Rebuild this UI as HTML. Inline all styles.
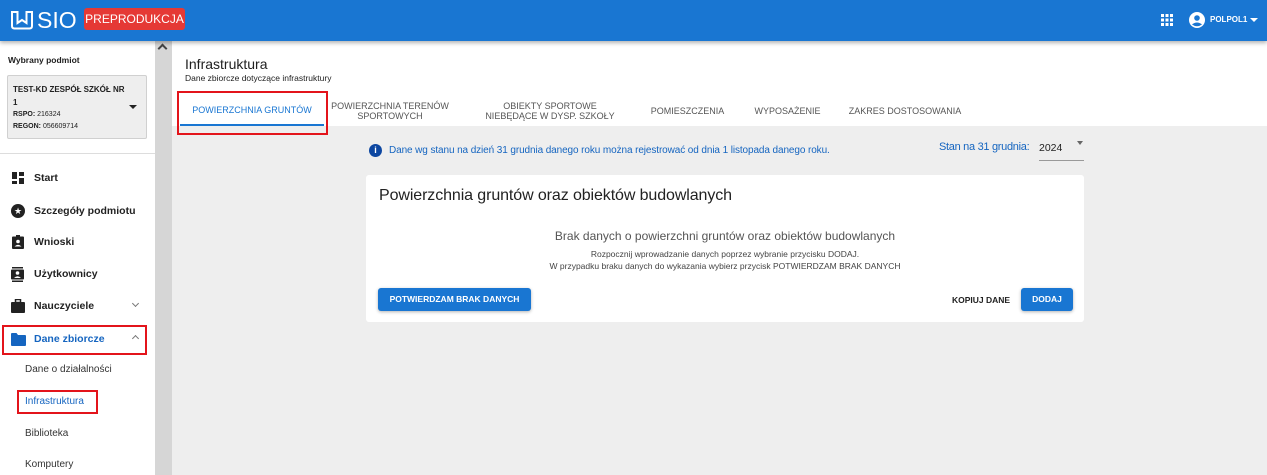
<!DOCTYPE html>
<html><head><meta charset="utf-8"><style>
*{box-sizing:border-box;margin:0;padding:0}
body{width:1267px;height:475px;overflow:hidden;font-family:"Liberation Sans",sans-serif;background:#eeeeee;position:relative;color:#212121}
.a{position:absolute;white-space:nowrap}
.hdr{left:0;top:0;width:1267px;height:41px;background:#1976d2;box-shadow:0 2px 4px rgba(0,0,0,.3);z-index:3}
.side{left:0;top:41px;width:155px;height:434px;background:#fff}
.sb{left:155px;top:41px;width:17px;height:434px;background:#d6d6d6}
.top{left:172px;top:41px;width:1095px;height:85px;background:#fff}
.tab{font-size:9px;color:#555;text-align:center;line-height:10px;white-space:normal}
.nav{left:11px;font-size:10.5px;font-weight:bold;color:#222}
.sub{left:25px;font-size:10px;color:#333}
.red{border:2.5px solid #e3141b}
</style></head><body>
<div class="a hdr">
  <svg class="a" style="left:10px;top:10px" width="24" height="20" viewBox="0 0 24 20"><path d="M2 2 L2 16 Q2 18.5 4.5 18.5 L19.5 18.5 Q22 18.5 22 16 L22 2 L16.5 2 L16.5 13 L12 10 L7.5 13 L7.5 2 Z" fill="none" stroke="#fff" stroke-width="2"/></svg>
  <div class="a" style="left:37px;top:7px;font-size:23px;color:#fff;letter-spacing:0px">SIO</div>
  <div class="a" style="left:84px;top:8px;width:101px;height:22px;background:#e53935;border-radius:3px;color:#fff;font-size:12px;line-height:22px;text-align:center">PREPRODUKCJA</div>
  <svg class="a" style="left:1161px;top:14px" width="12" height="12" viewBox="0 0 12 12" fill="#fff"><rect x="0" y="0" width="3" height="3"/><rect x="4.5" y="0" width="3" height="3"/><rect x="9" y="0" width="3" height="3"/><rect x="0" y="4.5" width="3" height="3"/><rect x="4.5" y="4.5" width="3" height="3"/><rect x="9" y="4.5" width="3" height="3"/><rect x="0" y="9" width="3" height="3"/><rect x="4.5" y="9" width="3" height="3"/><rect x="9" y="9" width="3" height="3"/></svg>
  <svg class="a" style="left:1189px;top:12px" width="16" height="16" viewBox="0 0 16 16"><circle cx="8" cy="8" r="8" fill="#fff"/><circle cx="8" cy="6" r="2.8" fill="#1976d2"/><path d="M3 12.5 Q8 8.5 13 12.5 Q8 16 3 12.5Z" fill="#1976d2"/></svg>
  <div class="a" style="left:1210px;top:15px;font-size:8px;color:#fff;font-weight:bold">POLPOL1</div>
  <div class="a" style="left:1250px;top:18px;border:4px solid transparent;border-top:4px solid #fff"></div>
</div>
<div class="a side">
  <div class="a" style="left:8px;top:14px;font-size:8.5px;font-weight:bold">Wybrany podmiot</div>
  <div class="a" style="left:7px;top:34px;width:140px;height:64px;background:#eeeeee;border:1px solid #d0d0d0;border-radius:2px"></div>
  <div class="a" style="left:13px;top:42px;font-size:8px;font-weight:bold;line-height:13px">TEST-KD ZESPÓŁ SZKÓŁ NR<br>1</div>
  <div class="a" style="left:13px;top:70px;font-size:7px"><b>RSPO:</b> 216324</div>
  <div class="a" style="left:13px;top:82px;font-size:7px"><b>REGON:</b> 056609714</div>
  <div class="a" style="left:129px;top:64px;border:4px solid transparent;border-top:4px solid #222"></div>
  <div class="a" style="left:0;top:112px;width:155px;height:1px;background:#ddd"></div>
</div>
<div class="a sb"><div class="a" style="left:4px;top:4px;width:7px;height:7px;border-left:2px solid #444;border-top:2px solid #444;transform:rotate(45deg)"></div></div>
<!-- nav -->
<div class="a" style="left:12px;top:172px;width:12px;height:12px;background:linear-gradient(#222,#222) 0 0/5px 7px no-repeat,linear-gradient(#222,#222) 7px 0/5px 4px no-repeat,linear-gradient(#222,#222) 0 9px/5px 3px no-repeat,linear-gradient(#222,#222) 7px 6px/5px 6px no-repeat"></div>
<div class="a nav" style="left:34px;top:172px">Start</div>
<div class="a" style="left:11px;top:204px;width:14px;height:14px;border-radius:50%;background:#222;color:#fff;font-size:9px;text-align:center;line-height:14px">★</div>
<div class="a nav" style="left:34px;top:205px">Szczegóły podmiotu</div>
<svg class="a" style="left:12px;top:235px" width="12" height="14" viewBox="0 0 12 14"><rect x="0" y="1.5" width="12" height="12.5" rx="1" fill="#222"/><rect x="4" y="0" width="4" height="3" fill="#222"/><circle cx="6" cy="6.5" r="1.8" fill="#fff"/><path d="M2.5 11.5 Q6 8 9.5 11.5Z" fill="#fff"/></svg>
<div class="a nav" style="left:34px;top:236px">Wnioski</div>
<svg class="a" style="left:11px;top:267px" width="13" height="15" viewBox="0 0 13 15"><rect x="1" y="0" width="11" height="1.5" fill="#222"/><rect x="0" y="2.5" width="13" height="10" rx="1" fill="#222"/><rect x="1" y="13.5" width="11" height="1.5" fill="#222"/><circle cx="6.5" cy="6" r="1.8" fill="#fff"/><path d="M3 11 Q6.5 7.5 10 11Z" fill="#fff"/></svg>
<div class="a nav" style="left:34px;top:268px">Użytkownicy</div>
<svg class="a" style="left:11px;top:299px" width="14" height="14" viewBox="0 0 14 14"><rect x="4.5" y="0.5" width="5" height="3" fill="none" stroke="#222" stroke-width="1.5"/><rect x="0" y="3" width="14" height="11" rx="1" fill="#222"/></svg>
<div class="a nav" style="left:34px;top:300px">Nauczyciele</div>
<div class="a" style="left:133px;top:301px;width:5px;height:5px;border-right:1.5px solid #777;border-bottom:1.5px solid #777;transform:rotate(45deg)"></div>
<div class="a red" style="left:2px;top:325px;width:145px;height:30px"></div>
<svg class="a" style="left:11px;top:333px" width="15" height="13" viewBox="0 0 15 13"><path d="M0 1 Q0 0 1 0 L5.5 0 L7 2 L14 2 Q15 2 15 3 L15 12 Q15 13 14 13 L1 13 Q0 13 0 12Z" fill="#1565c0"/></svg>
<div class="a nav" style="left:34px;top:333px;color:#1565c0">Dane zbiorcze</div>
<div class="a" style="left:133px;top:336px;width:5px;height:5px;border-left:1.5px solid #777;border-top:1.5px solid #777;transform:rotate(45deg)"></div>
<div class="a sub" style="top:364px">Dane o działalności</div>
<div class="a red" style="left:17px;top:390px;width:81px;height:24px"></div>
<div class="a sub" style="top:396px;color:#1565c0">Infrastruktura</div>
<div class="a sub" style="top:428px">Biblioteka</div>
<div class="a sub" style="top:459px">Komputery</div>
<!-- top -->
<div class="a top"></div>
<div class="a" style="left:185px;top:56px;font-size:14px">Infrastruktura</div>
<div class="a" style="left:185px;top:73px;font-size:8.5px">Dane zbiorcze dotyczące infrastruktury</div>
<div class="a red" style="left:177px;top:91px;width:151px;height:44px"></div>
<div class="a tab" style="left:180px;top:105px;width:144px;color:#1976d2">POWIERZCHNIA GRUNTÓW</div>
<div class="a" style="left:180px;top:124px;width:144px;height:2px;background:#1976d2"></div>
<div class="a tab" style="left:330px;top:101px;width:120px">POWIERZCHNIA TERENÓW SPORTOWYCH</div>
<div class="a tab" style="left:465px;top:101px;width:170px">OBIEKTY SPORTOWE<br>NIEBĘDĄCE W DYSP. SZKOŁY</div>
<div class="a tab" style="left:645px;top:106px;width:85px">POMIESZCZENIA</div>
<div class="a tab" style="left:745px;top:106px;width:85px">WYPOSAŻENIE</div>
<div class="a tab" style="left:840px;top:106px;width:130px">ZAKRES DOSTOSOWANIA</div>
<!-- info -->
<div class="a" style="left:369px;top:144px;width:13px;height:13px;border-radius:50%;background:#0d47a1;color:#fff;font-size:9px;font-weight:bold;text-align:center;line-height:13px">i</div>
<div class="a" style="left:389px;top:145px;font-size:10px;color:#1565c0;letter-spacing:-0.1px">Dane wg stanu na dzień 31 grudnia danego roku można rejestrować od dnia 1 listopada danego roku.</div>
<div class="a" style="left:939px;top:141px;font-size:11px;color:#1565c0;letter-spacing:-0.3px">Stan na 31 grudnia:</div>
<div class="a" style="left:1039px;top:142px;font-size:10.5px">2024</div>
<div class="a" style="left:1077px;top:141px;border:3.5px solid transparent;border-top:4px solid #666"></div>
<div class="a" style="left:1039px;top:160px;width:45px;height:1px;background:#999"></div>
<!-- card -->
<div class="a" style="left:366px;top:175px;width:718px;height:147px;background:#fff;border-radius:3px"></div>
<div class="a" style="left:379px;top:187px;font-size:16px;color:#222;letter-spacing:-0.1px">Powierzchnia gruntów oraz obiektów budowlanych</div>
<div class="a" style="left:366px;top:229px;width:718px;text-align:center;font-size:12px;color:#555">Brak danych o powierzchni gruntów oraz obiektów budowlanych</div>
<div class="a" style="left:366px;top:248px;width:718px;text-align:center;font-size:8.5px;color:#444;line-height:12px">Rozpocznij wprowadzanie danych poprzez wybranie przycisku DODAJ.<br>W przypadku braku danych do wykazania wybierz przycisk POTWIERDZAM BRAK DANYCH</div>
<div class="a" style="left:378px;top:288px;width:153px;height:23px;background:#1976d2;border-radius:3px;box-shadow:0 1px 3px rgba(0,0,0,.3);color:#fff;font-size:8.5px;font-weight:bold;text-align:center;line-height:23px">POTWIERDZAM BRAK DANYCH</div>
<div class="a" style="left:952px;top:295px;font-size:8.5px;font-weight:bold">KOPIUJ DANE</div>
<div class="a" style="left:1021px;top:288px;width:52px;height:23px;background:#1976d2;border-radius:3px;box-shadow:0 1px 3px rgba(0,0,0,.3);color:#fff;font-size:8.5px;font-weight:bold;text-align:center;line-height:23px">DODAJ</div>
</body></html>
